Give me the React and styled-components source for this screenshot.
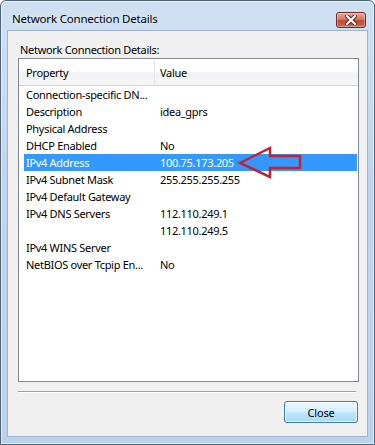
import React from 'react';
import styled, {createGlobalStyle} from 'styled-components';

const GlobalStyle = createGlobalStyle`
  body {
    margin: 0;
    background: #ffffff;
    font-family: "Noto Sans", "Open Sans", sans-serif;
  }
`;

const Ventana = styled.div`
  box-sizing: border-box;
  width: 375px;
  height: 445px;
  display: flex;
  flex-direction: column;
  border: 1px solid #4f6378;
  border-radius: 6px 6px 0 0;
  background: linear-gradient(180deg, #cfe0f3 0%, #c0d5ed 40%, #bcd2ec 100%);
  box-shadow: inset 0 0 0 1px rgba(255, 255, 255, 0.6);
`;

const BarraTitulo = styled.div`
  height: 29px;
  display: flex;
  align-items: flex-start;
  justify-content: space-between;
  padding: 0 8px 0 11px;
`;

const Titulo = styled.span`
  font-size: 11.5px;
  letter-spacing: -0.2px;
  line-height: 15px;
  margin-top: 10px;
  color: #000;
  text-shadow: 0 0 6px rgba(255, 255, 255, 0.9);
`;

const BotonCerrar = styled.div`
  box-sizing: border-box;
  width: 30px;
  height: 16px;
  margin-top: 11px;
  border: 1px solid #6e2a25;
  border-radius: 3px;
  background: linear-gradient(180deg, #e8a89c 0%, #d77866 45%, #c24634 55%, #cf6a52 100%);
  box-shadow: inset 0 0 0 1px rgba(255, 255, 255, 0.35);
  display: flex;
  align-items: center;
  justify-content: center;
`;

const Cuerpo = styled.div`
  flex: 1;
  margin: 0 6px 7px 6px;
  background: #f0f0f0;
  border: 1px solid #9fb5ce;
  display: flex;
  flex-direction: column;
  padding: 10px 9px 0 10px;
`;

const Etiqueta = styled.div`
  font-size: 11px;
  letter-spacing: -0.3px;
  color: #000;
  padding-left: 2px;
  height: 17px;
  line-height: 17px;
`;

const Lista = styled.div`
  position: relative;
  box-sizing: border-box;
  width: 341px;
  height: 324px;
  background: #ffffff;
  border: 1px solid #828790;
`;

const Cabecera = styled.div`
  display: grid;
  grid-template-columns: 136px 1fr;
  height: 26px;
  background: linear-gradient(180deg, #ffffff 0%, #ffffff 45%, #f2f3f5 55%, #f4f5f7 100%);
  border-bottom: 1px solid #d5d5d5;
`;

const CeldaCabecera = styled.div`
  font-size: 11px;
  letter-spacing: -0.3px;
  color: #000;
  display: flex;
  align-items: center;
  padding-left: ${p => p.$sangria}px;
  border-right: ${p => (p.$divisor ? '1px solid #e3e5e8' : 'none')};
`;

const Fila = styled.div`
  display: grid;
  grid-template-columns: 135px 1fr;
  height: 17px;
  margin-left: 5px;
  margin-right: 1px;
  background: ${p => (p.$seleccionada ? '#3399ff' : 'transparent')};
  color: ${p => (p.$seleccionada ? '#ffffff' : '#000000')};
`;

const Celda = styled.div`
  font-size: 11px;
  letter-spacing: -0.3px;
  line-height: 17px;
  padding-left: ${p => p.$sangria}px;
  white-space: nowrap;
  overflow: hidden;
`;

const Flecha = styled.svg`
  position: absolute;
  left: 216px;
  top: 85px;
`;

const Separador = styled.div`
  margin: 9px 1px 0 0;
  width: 338px;
  height: 1px;
  background: #a0a0a0;
  border-bottom: 1px solid #ffffff;
`;

const Pie = styled.div`
  display: flex;
  justify-content: flex-end;
  padding: 8px 0 0 0;
`;

const Boton = styled.button`
  box-sizing: border-box;
  width: 74px;
  height: 22px;
  font-family: inherit;
  font-size: 11px;
  letter-spacing: -0.2px;
  color: #000;
  border: 1px solid #3c7fb1;
  border-radius: 3px;
  background: linear-gradient(180deg, #eaf6fd 0%, #d9f0fc 45%, #bee6fd 55%, #a7d9f5 100%);
  box-shadow: inset 0 0 0 1px rgba(255, 255, 255, 0.7);
  padding: 0;
`;

const filas = [
  ['Connection-specific DN...', ''],
  ['Description', 'idea_gprs'],
  ['Physical Address', ''],
  ['DHCP Enabled', 'No'],
  ['IPv4 Address', '100.75.173.205'],
  ['IPv4 Subnet Mask', '255.255.255.255'],
  ['IPv4 Default Gateway', ''],
  ['IPv4 DNS Servers', '112.110.249.1'],
  ['', '112.110.249.5'],
  ['IPv4 WINS Server', ''],
  ['NetBIOS over Tcpip En...', 'No'],
];

function App() {
  return (
    <>
      <GlobalStyle />
      <Ventana>
        <BarraTitulo>
          <Titulo>Network Connection Details</Titulo>
          <BotonCerrar>
            <svg width="12" height="10" viewBox="0 0 12 10">
              <path d="M2 1 L10 9 M10 1 L2 9" stroke="#5a1c16" strokeWidth="4" strokeLinecap="square" />
              <path d="M2 1 L10 9 M10 1 L2 9" stroke="#ffffff" strokeWidth="2.2" strokeLinecap="square" />
            </svg>
          </BotonCerrar>
        </BarraTitulo>
        <Cuerpo>
          <Etiqueta>Network Connection Details:</Etiqueta>
          <Lista>
            <Cabecera>
              <CeldaCabecera $sangria={7} $divisor>Property</CeldaCabecera>
              <CeldaCabecera $sangria={5}>Value</CeldaCabecera>
            </Cabecera>
            {filas.map(([prop, valor], i) => (
              <Fila key={i} $seleccionada={i === 4}>
                <Celda $sangria={2}>{prop}</Celda>
                <Celda $sangria={1}>{valor}</Celda>
              </Fila>
            ))}
            <Flecha width="72" height="38" viewBox="0 0 72 38">
              <polygon
                points="5,19 35,4 35,12 65,12 65,24 35,24 35,33"
                fill="none"
                stroke="#c4222f"
                strokeWidth="2.5"
                strokeLinejoin="miter"
              />
            </Flecha>
          </Lista>
          <Separador />
          <Pie>
            <Boton>Close</Boton>
          </Pie>
        </Cuerpo>
      </Ventana>
    </>
  );
}

export default App;
